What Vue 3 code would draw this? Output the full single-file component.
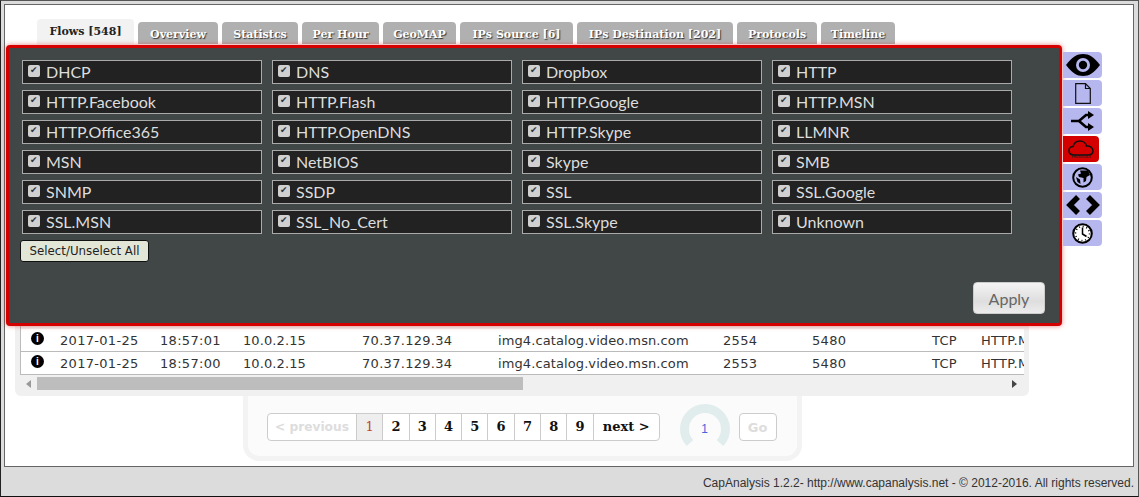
<script setup>
const tabs = [
  { label: 'Flows [548]', w: 97, active: true },
  { label: 'Overview', w: 80 },
  { label: 'Statistcs', w: 76 },
  { label: 'Per Hour', w: 77 },
  { label: 'GeoMAP', w: 73 },
  { label: 'IPs Source [6]', w: 113 },
  { label: 'IPs Destination [202]', w: 156 },
  { label: 'Protocols', w: 80 },
  { label: 'Timeline', w: 74 }
]

const protocols = [
  'DHCP', 'DNS', 'Dropbox', 'HTTP',
  'HTTP.Facebook', 'HTTP.Flash', 'HTTP.Google', 'HTTP.MSN',
  'HTTP.Office365', 'HTTP.OpenDNS', 'HTTP.Skype', 'LLMNR',
  'MSN', 'NetBIOS', 'Skype', 'SMB',
  'SNMP', 'SSDP', 'SSL', 'SSL.Google',
  'SSL.MSN', 'SSL_No_Cert', 'SSL.Skype', 'Unknown'
]

const flows = [
  { date: '2017-01-25', time: '18:57:01', src: '10.0.2.15', dst: '70.37.129.34', host: 'img4.catalog.video.msn.com', sport: 2554, dport: 5480, l4: 'TCP', l7: 'HTTP.MSN' },
  { date: '2017-01-25', time: '18:57:00', src: '10.0.2.15', dst: '70.37.129.34', host: 'img4.catalog.video.msn.com', sport: 2553, dport: 5480, l4: 'TCP', l7: 'HTTP.MSN' }
]

const pages = [2, 3, 4, 5, 6, 7, 8, 9]
</script>

<template>
  <div class="page">
    <div class="main">
      <ul class="tabs">
        <li
          v-for="t in tabs"
          :key="t.label"
          :class="['tab', { active: t.active }]"
          :style="{ width: t.w + 'px' }"
        >{{ t.label }}</li>
      </ul>

      <div class="flows">
        <div class="flows-scroll">
          <table class="flows-table">
            <colgroup>
              <col style="width: 39px" />
              <col style="width: 100px" />
              <col style="width: 83px" />
              <col style="width: 119px" />
              <col style="width: 136px" />
              <col style="width: 225px" />
              <col style="width: 89px" />
              <col style="width: 120px" />
              <col style="width: 49px" />
              <col style="width: 43px" />
            </colgroup>
            <tr v-for="f in flows" :key="f.sport">
              <td><span class="info">i</span></td>
              <td>{{ f.date }}</td>
              <td>{{ f.time }}</td>
              <td class="tight">{{ f.src }}</td>
              <td>{{ f.dst }}</td>
              <td class="tight">{{ f.host }}</td>
              <td>{{ f.sport }}</td>
              <td>{{ f.dport }}</td>
              <td>{{ f.l4 }}</td>
              <td class="clip">{{ f.l7 }}</td>
            </tr>
          </table>
        </div>
        <div class="scrollbar">
          <span class="arrow left"></span>
          <div class="thumb"></div>
          <span class="arrow right"></span>
        </div>
      </div>

      <div class="pager">
        <div class="pagination">
          <span class="pg prev">&lt; previous</span>
          <span class="pg current">1</span>
          <span v-for="p in pages" :key="p" class="pg">{{ p }}</span>
          <span class="pg next">next &gt;</span>
        </div>
        <div class="gauge">
          <svg width="52" height="46" viewBox="0 0 52 46">
            <path d="M11 39 A20.5 20.5 0 1 1 41 39" fill="none" stroke="#e1eded" stroke-width="9" />
          </svg>
          <span class="gauge-val">1</span>
        </div>
        <button class="go">Go</button>
      </div>

      <div class="filter">
        <div class="filter-grid">
          <label v-for="p in protocols" :key="p" class="proto">
            <input type="checkbox" checked />
            <span>{{ p }}</span>
          </label>
        </div>
        <button class="select-all">Select/Unselect All</button>
        <button class="apply">Apply</button>
      </div>

      <div class="side">
        <div class="side-btn">
          <svg width="34" height="22" viewBox="0 0 34 22">
            <path d="M0 11 C6 3 11 0 17 0 C23 0 28 3 34 11 C28 19 23 22 17 22 C11 22 6 19 0 11Z" fill="#000" />
            <circle cx="17" cy="11" r="7" fill="#b7b7f0" />
            <circle cx="17" cy="11" r="4.2" fill="#000" />
          </svg>
        </div>
        <div class="side-btn">
          <svg width="16" height="21" viewBox="0 0 16 21">
            <path d="M.7.7H10.5L15.3 5.5V20.3H.7Z M10.5.7V5.5H15.3" fill="none" stroke="#111" stroke-width="1.2" />
          </svg>
        </div>
        <div class="side-btn">
          <svg width="24" height="20" viewBox="0 0 24 20">
            <path d="M0 10H8L15 4H20M8 10L15 16H20" fill="none" stroke="#000" stroke-width="2.6" />
            <path d="M17 0L23 4L17 8ZM17 12L23 16L17 20Z" fill="#000" />
          </svg>
        </div>
        <div class="side-btn on">
          <svg width="26" height="16" viewBox="0 0 26 16">
            <path d="M6 15C2.500 15 1 13 1 10.500C1 8 3 6.500 5 6.500C6 3 9 1 12 1C15.500 1 18 3.500 18.500 6C22 5.500 25 8 25 10.800C25 13.500 23 15 20 15Z" fill="none" stroke="#111" stroke-width="1.5" />
          </svg>
          <span class="side-caption">PROTOCOLS</span>
        </div>
        <div class="side-btn">
          <svg width="21" height="21" viewBox="0 0 21 21">
            <circle cx="10.500" cy="10.500" r="9.300" fill="none" stroke="#000" stroke-width="2" />
            <path d="M8 3.500H16L18 8L14.500 10L14 14L11.500 15.500L11.500 11L7 10L6 7.500L9 6.500Z M4 10L8 12.500L8.500 17L5.500 15Z" fill="#000" />
          </svg>
        </div>
        <div class="side-btn">
          <svg width="34" height="20" viewBox="0 0 34 20">
            <path d="M12 2L4 10L12 18M22 2L30 10L22 18" fill="none" stroke="#000" stroke-width="5.500" />
          </svg>
        </div>
        <div class="side-btn">
          <svg width="21" height="21" viewBox="0 0 21 21">
            <circle cx="10.500" cy="10.500" r="9.300" fill="#fff" stroke="#000" stroke-width="2" />
            <circle cx="10.500" cy="10.500" r="7" fill="none" stroke="#000" stroke-width="1.600" stroke-dasharray="1 2.660" />
            <path d="M10.500 4.500V11L14.500 13.500" fill="none" stroke="#000" stroke-width="1.500" />
          </svg>
        </div>
      </div>
    </div>

    <div class="footer">CapAnalysis 1.2.2- http://www.capanalysis.net - © 2012-2016. All rights reserved.</div>
  </div>
</template>

<style>
html,
body {
  margin: 0;
  overflow: hidden;
}
</style>

<style scoped>
.page {
  box-sizing: border-box;
  display: flex;
  flex-direction: column;
  width: 1139px;
  height: 497px;
  padding: 3px 4px 0 3px;
  border: 1px solid #555;
  border-bottom-color: #111;
  border-left-color: #222;
  background: #dcdcdc;
}

.main {
  position: relative;
  box-sizing: border-box;
  height: 463px;
  padding-top: 14px;
  border: 1px solid #666;
  background: #fff;
}

.tabs {
  display: flex;
  align-items: flex-end;
  gap: 4px;
  height: 25px;
  margin: 0;
  padding: 0 0 0 32px;
  list-style: none;
}

.tab {
  box-sizing: border-box;
  height: 22px;
  border-radius: 4px 4px 0 0;
  background: #b0b0b0;
  color: #fff;
  font: bold 11px/25px "DejaVu Serif", serif;
  text-align: center;
  text-shadow: 1px 1px 1px #333;
  white-space: nowrap;
}

.tab.active {
  height: 25px;
  background: #f2f2f2;
  color: #222;
  text-shadow: none;
}

.flows {
  box-sizing: border-box;
  width: 1014px;
  height: 110px;
  margin: 242px 0 0 10px;
  padding: 0 5px;
  border-radius: 0 0 6px 6px;
  background: #f0f0f0;
}

.flows-scroll {
  overflow: hidden;
  height: 89px;
  padding-top: 43px;
  box-sizing: border-box;
  border-left: 1px solid #bbb;
}

.flows-table {
  table-layout: fixed;
  width: 1003px;
  border-collapse: collapse;
  background: #fff;
  color: #333;
  font: 13px "DejaVu Sans", sans-serif;
  letter-spacing: 0.3px;
}

.flows-table td {
  height: 22px;
  padding: 0;
  border-bottom: 1px solid #bbb;
  white-space: nowrap;
}

.flows-table .tight {
  letter-spacing: 0.1px;
}

.flows-table .clip {
  overflow: hidden;
}

.info {
  display: block;
  width: 13px;
  height: 13px;
  margin: 0 0 4px 10px;
  border-radius: 50%;
  background: #000;
  color: #fff;
  font: bold 10px/13px "Liberation Sans", sans-serif;
  text-align: center;
}

.scrollbar {
  display: flex;
  align-items: center;
  height: 17px;
}

.thumb {
  width: 486px;
  height: 13px;
  margin-left: 6px;
  background: #bdbdbd;
}

.arrow {
  width: 0;
  height: 0;
  border-top: 4px solid transparent;
  border-bottom: 4px solid transparent;
}

.arrow.left {
  margin-left: 6px;
  border-right: 5px solid #999;
}

.arrow.right {
  margin-left: 489px;
  border-left: 5px solid #444;
}

.pager {
  box-sizing: border-box;
  display: flex;
  align-items: flex-start;
  width: 559px;
  height: 65px;
  margin-left: 238px;
  padding-top: 17px;
  padding-left: 19px;
  border: 5px solid #f3f3f3;
  border-top: 0;
  border-radius: 0 0 16px 16px;
  background: #fbfbfb;
}

.pagination {
  display: flex;
  height: 28px;
  box-sizing: border-box;
  border: 1px solid #ccc;
  border-radius: 4px;
  background: #fff;
}

.pg {
  box-sizing: border-box;
  width: 26.300px;
  border-right: 1px solid #ccc;
  color: #111;
  font: bold 13px/26px "DejaVu Serif", serif;
  text-align: center;
}

.pg.prev {
  width: 89px;
  color: #ddd;
  font: bold 12.200px/26px "DejaVu Sans", sans-serif;
}

.pg.current {
  background: #eee;
  color: #c0482a;
  font: 13px/26px "DejaVu Serif", serif;
}

.pg.next {
  width: 65px;
  border-right: 0;
}

.gauge {
  position: relative;
  width: 52px;
  height: 46px;
  margin: -9px 0 0 19px;
}

.gauge-val {
  position: absolute;
  top: 18px;
  left: 0;
  width: 52px;
  color: #4666dd;
  font: 12px "Liberation Sans", sans-serif;
  text-align: center;
}

.go {
  box-sizing: border-box;
  width: 38px;
  height: 28px;
  margin-left: 8px;
  padding: 0;
  border: 1px solid #ccc;
  border-radius: 4px;
  background: #fff;
  color: #ddd;
  font: bold 13px "DejaVu Sans", sans-serif;
}

.filter {
  position: absolute;
  top: 40px;
  left: 1px;
  box-sizing: border-box;
  width: 1056px;
  height: 281px;
  padding: 12px 13px;
  border: 3px solid #d40000;
  border-radius: 4px;
  background: #414747;
  box-shadow: 0 0 5px rgba(212, 0, 0, 0.5);
}

.filter-grid {
  display: grid;
  grid-template-columns: repeat(4, 240px);
  grid-auto-rows: 24px;
  gap: 6px 10px;
}

.proto {
  display: flex;
  align-items: center;
  box-sizing: border-box;
  padding-left: 5px;
  border: 1px solid #aaa;
  background: #222;
  color: #ddd;
  font: 16px "Lato", sans-serif;
}

.proto span {
  margin-top: -2px;
}

.proto input {
  position: relative;
  box-sizing: border-box;
  width: 12px;
  height: 12px;
  margin: -3px 6px 0 0;
  appearance: none;
  border-radius: 2px;
  background: #d0d0d0;
}

.proto input::after {
  content: "✔";
  position: absolute;
  top: 0;
  left: 2px;
  color: #333;
  font: 9px/11px "DejaVu Sans", sans-serif;
}

.select-all {
  display: block;
  box-sizing: border-box;
  width: 129px;
  height: 22px;
  margin: 6px 0 0 -2px;
  padding: 0;
  border: 1px solid #111;
  border-radius: 3px;
  background: #e2e6d6;
  color: #222;
  font: 11.800px "DejaVu Sans", sans-serif;
}

.apply {
  position: absolute;
  right: 14px;
  bottom: 9px;
  box-sizing: border-box;
  width: 72px;
  height: 32px;
  padding: 0;
  border: 1px solid #ccc;
  border-radius: 4px;
  background: linear-gradient(#f4f4f4, #dedede 60%, #ececec);
  color: #666;
  font: 16px "Lato", sans-serif;
}

.side {
  position: absolute;
  top: 47px;
  left: 1058px;
  display: flex;
  flex-direction: column;
  gap: 2px;
}

.side-btn {
  display: flex;
  flex-direction: column;
  align-items: center;
  justify-content: center;
  width: 39px;
  height: 26px;
  border-radius: 0 4px 4px 0;
  background: #b7b7f0;
}

.side-btn.on {
  width: 36px;
  background: #d40000;
}

.side-caption {
  margin-top: -1px;
  color: #222;
  font: bold 3px/4px "Liberation Sans", sans-serif;
  white-space: nowrap;
}

.footer {
  padding-top: 9px;
  color: #333;
  font: 12px "Liberation Sans", sans-serif;
  text-align: right;
}
</style>
